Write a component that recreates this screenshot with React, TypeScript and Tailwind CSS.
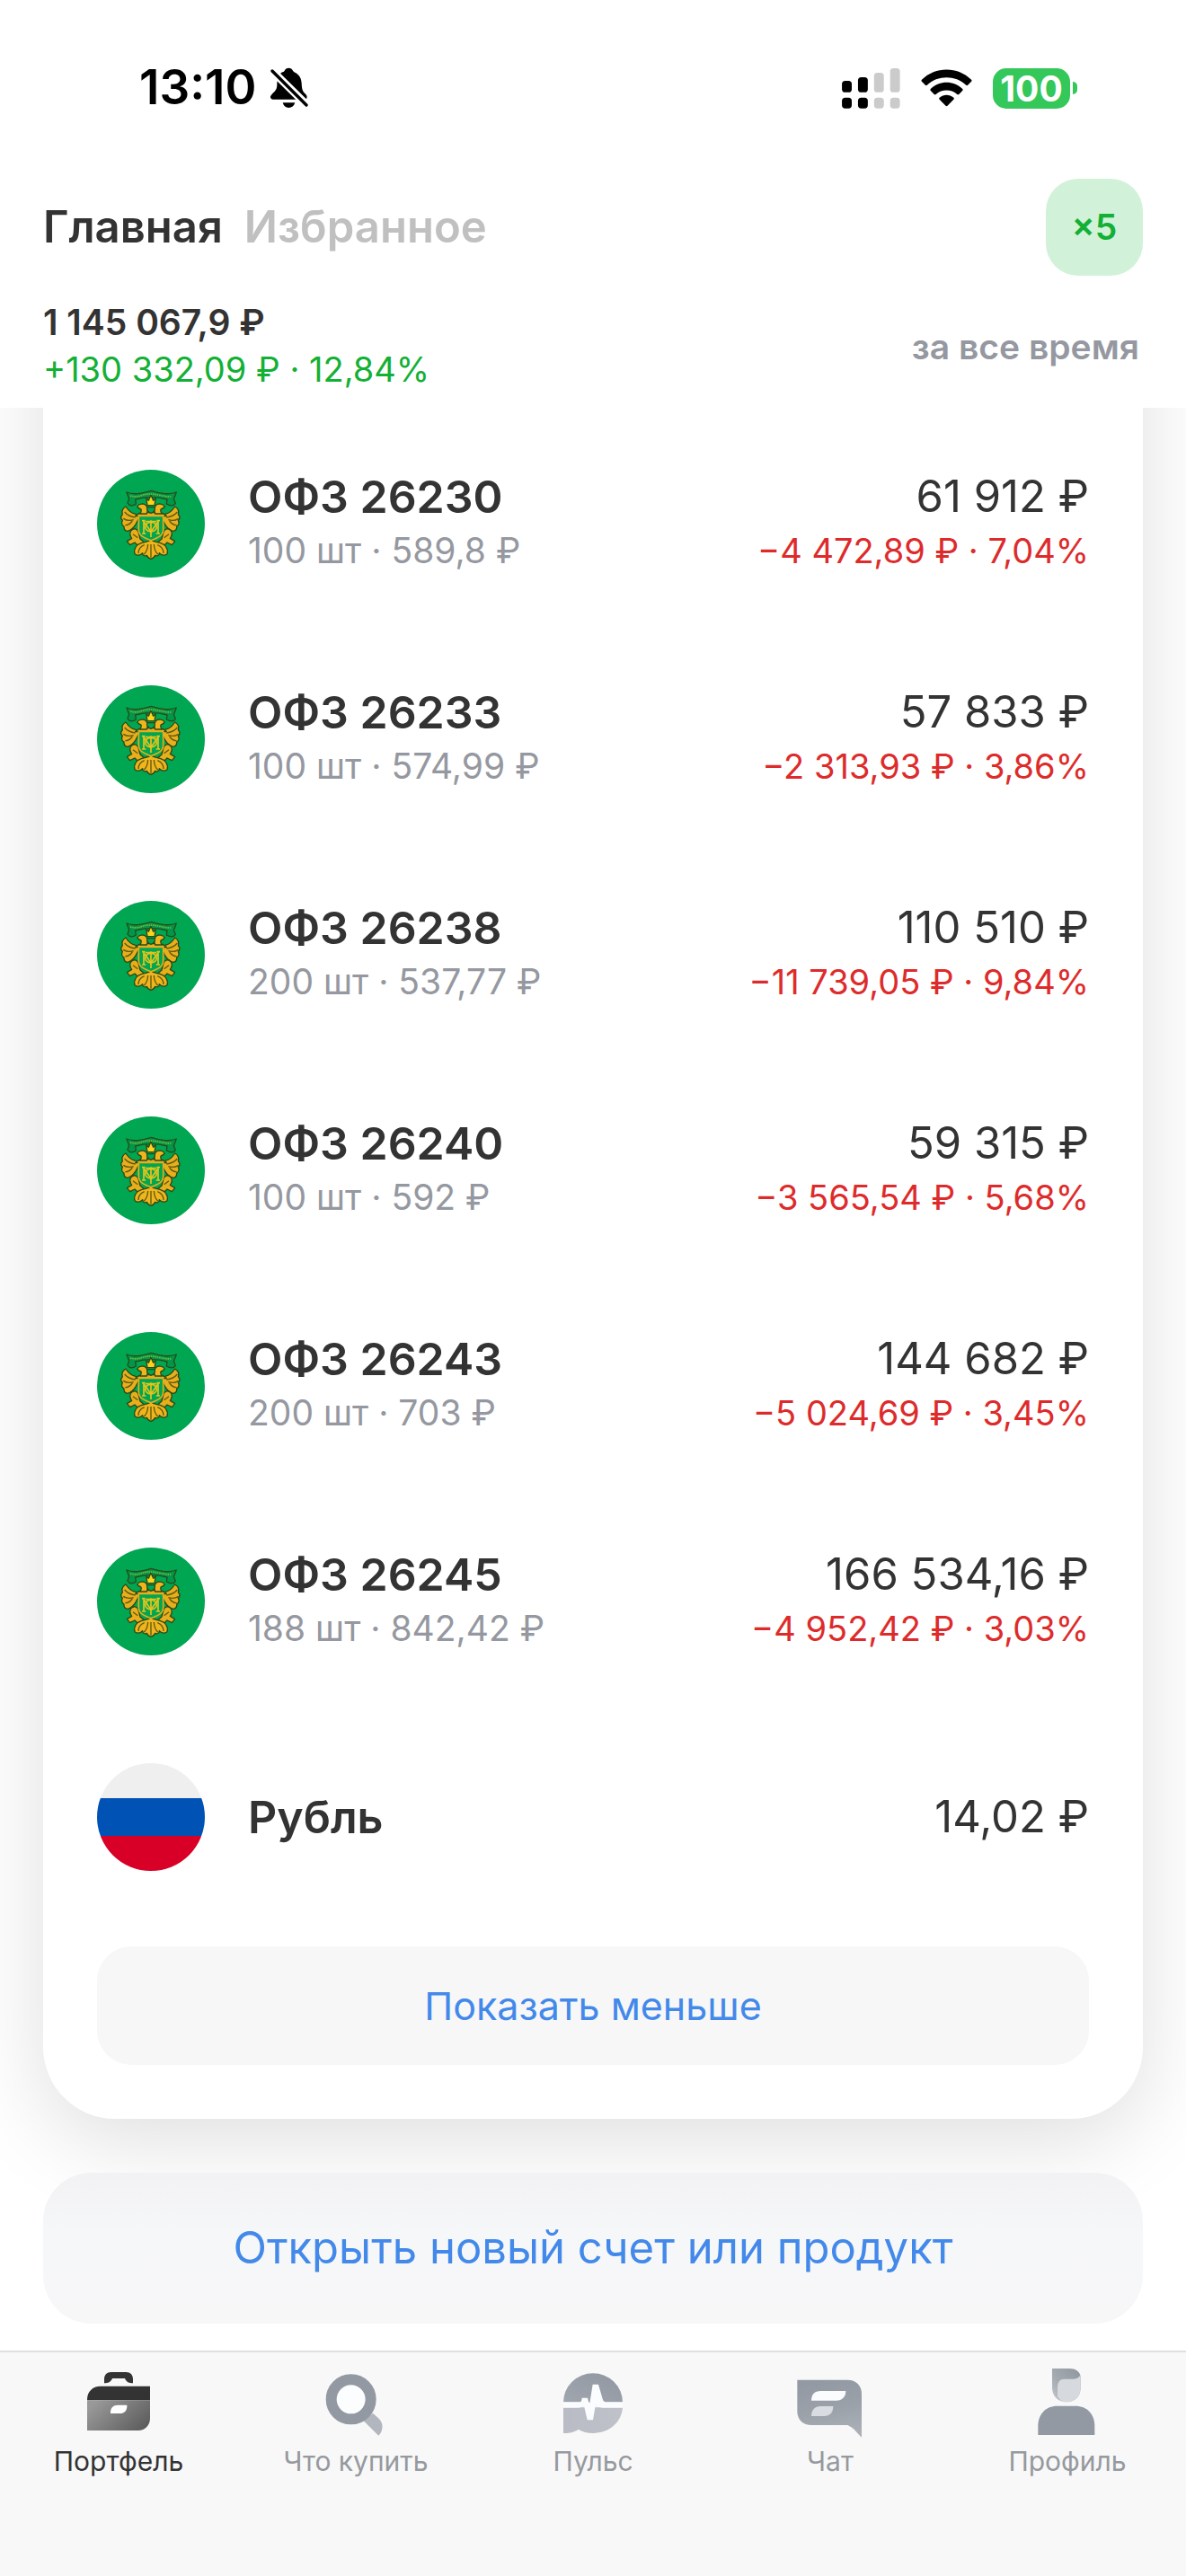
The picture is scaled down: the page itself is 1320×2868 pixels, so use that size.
import React from 'react';

interface Position {
  name: string;
  details?: string;
  amount: string;
  change?: string;
}

const positions: Position[] = [
  { name: 'ОФЗ 26230', details: '100 шт · 589,8 ₽', amount: '61 912 ₽', change: '−4 472,89 ₽ · 7,04%' },
  { name: 'ОФЗ 26233', details: '100 шт · 574,99 ₽', amount: '57 833 ₽', change: '−2 313,93 ₽ · 3,86%' },
  { name: 'ОФЗ 26238', details: '200 шт · 537,77 ₽', amount: '110 510 ₽', change: '−11 739,05 ₽ · 9,84%' },
  { name: 'ОФЗ 26240', details: '100 шт · 592 ₽', amount: '59 315 ₽', change: '−3 565,54 ₽ · 5,68%' },
  { name: 'ОФЗ 26243', details: '200 шт · 703 ₽', amount: '144 682 ₽', change: '−5 024,69 ₽ · 3,45%' },
  { name: 'ОФЗ 26245', details: '188 шт · 842,42 ₽', amount: '166 534,16 ₽', change: '−4 952,42 ₽ · 3,03%' },
  { name: 'Рубль', amount: '14,02 ₽' }
];

const BellOffIcon = () => (
  <svg viewBox="0 0 126 138" className="w-[42px] h-[46px]" aria-hidden="true">
    <path
      d="M37 17c5-2 8-3 10-6 3-6 7-9 14-9s11 3 14 9c2 4 6 5 10 8 12 8 18 18 19 34 1 20 3 27 14 37 6 6 5 17-3 17H9c-9 0-12-9-6-15 13-13 18-17 19-31 0-19 3-34 15-44z"
      fill="#000"
    />
    <path d="M41 118h41c-3 11-11 17-21 17s-17-6-20-17z" fill="#000" />
    <path d="M-4 2l128 126" stroke="#fff" strokeWidth="26" />
    <path d="M6 12l114 114" stroke="#000" strokeWidth="10" strokeLinecap="round" />
  </svg>
);

const SignalIcon = () => (
  <svg viewBox="0 0 196 136" className="w-[65px] h-[45px]" aria-hidden="true">
    <g fill="#000">
      <rect x="0" y="42" width="33" height="39" rx="11" />
      <rect x="54" y="30" width="33" height="51" rx="11" />
      <rect x="0" y="99" width="33" height="36" rx="11" />
      <rect x="54" y="99" width="33" height="36" rx="11" />
    </g>
    <g fill="#cbcbcb">
      <rect x="108" y="15" width="33" height="66" rx="11" />
      <rect x="162" y="0" width="33" height="81" rx="11" />
      <rect x="108" y="99" width="33" height="36" rx="11" />
      <rect x="162" y="99" width="33" height="36" rx="11" />
    </g>
  </svg>
);

const WifiIcon = () => (
  <svg viewBox="0 0 172 128" className="w-[57px] h-[42px]" aria-hidden="true">
    <path d="M2 36q-3 3 0 6l12 12q3 3 6 0C56 20 116 20 152 54q3 3 6 0l12-12q3-3 0-6C124-10 48-10 2 36z" />
    <path d="M32 67q-3 3 0 6l12 12q3 3 6 0c20-18 52-18 72 0q3 3 6 0l12-12q3-3 0-6c-31-29-77-29-108 0z" />
    <path d="M62 97q-3 3 0 6l21 21q3 3 6 0l21-21q3-3 0-6c-14-13-34-13-48 0z" />
  </svg>
);

const Emblem = () => (
  <svg viewBox="54 39 360 360" className="w-[120px] h-[120px] shrink-0" aria-hidden="true">
    <circle cx="234" cy="219" r="180" fill="#00a651" />
    <g stroke="#2a4a18" strokeWidth="4" strokeLinejoin="round">
      {/* ribbon */}
      <path
        d="M153 114c24 10 50 4 82-5 32 9 58 15 84 5l-9 23 6 14c-8 12-20 8-30 2l2-15c-32-9-72-9-106 0l2 15c-10 8-22 8-28-3l5-14z"
        fill="#00974b"
      />
      {/* wings */}
      <path
        d="M150 162c-10 6-15 14-11 26-6 6-6 14 0 20-4 8-2 16 5 20-1 9 4 15 12 16 14-3 22-14 28-24l14-26-18-8c-14-2-22-12-30-24z"
        fill="#e8ae1c"
      />
      <path
        d="M314 162c10 6 15 14 11 26 6 6 6 14 0 20 4 8 2 16-5 20 1 9-4 15-12 16-14-3-22-14-28-24l-14-26 18-8c14-2 22-12 30-24z"
        fill="#e8ae1c"
      />
      {/* shoulders and heads */}
      <path d="M182 194c8-12 26-14 52-12 26-2 44 0 52 12z" fill="#e8ae1c" />
      <path d="M188 162c6-10 22-12 30-4 6 10 6 18 2 28h-22c4-8 6-12 2-16-4 0-8-3-12-8z" fill="#f0b41c" />
      <path d="M280 162c-6-10-22-12-30-4-6 10-6 18-2 28h22c-4-8-6-12-2-16 4 0 8-3 12-8z" fill="#f0b41c" />
      <path d="M218 134l8 8 8-18 8 18 8-8-4 24h-24z" fill="#ffd21c" />
      <path d="M221 164h26c2 9-4 17-13 20-9-3-15-11-13-20z" fill="#00a651" />
      {/* legs */}
      <path d="M168 242c8-10 20-6 24 4l6 24 14 12-20 12-12-12-16 8-10-12 16-10c-6-8-8-18-2-26z" fill="#e8ae1c" />
      <path d="M300 242c-8-10-20-6-24 4l-6 24-14 12 20 12 12-12 16 8 10-12-16-10c6-8 8-18 2-26z" fill="#e8ae1c" />
      {/* tail */}
      <path
        d="M234 272c-8 8-20 8-32 12-16 5-26 18-22 36 8 6 18 5 26-3 0 8 6 12 14 8 2 6 8 10 14 12 6-2 12-6 14-12 8 4 14 0 14-8 8 8 18 9 26 3 4-18-6-31-22-36-12-4-24-4-32-12z"
        fill="#f0b41c"
      />
    </g>
    <path d="M165 126q20 6 40-2t58 0 40 3" fill="none" stroke="#8dbb35" strokeWidth="5" strokeDasharray="4 3" />
    <g fill="none" stroke="#5c5a14" strokeWidth="4">
      <path d="M146 180c10 12 20 16 36 18M142 202c12 8 22 8 34 4M148 224c10 0 18-6 24-14M322 180c-10 12-20 16-36 18M326 202c-12 8-22 8-34 4M320 224c-10 0-18-6-24-14" />
      <path d="M234 288v44M224 288c-1 14-4 26-14 34M244 288c1 14 4 26 14 34M212 290c-12 5-20 14-20 28M256 290c12 5 20 14 20 28" />
      <path d="M174 254l16 12M294 254l-16 12" />
    </g>
    <path
      d="M193 193h82v46c0 20-18 28-41 36-23-8-41-16-41-36z"
      fill="#00a651"
      stroke="#e8ae1c"
      strokeWidth="5"
    />
    {/* monogram on the shield */}
    <g fill="none" stroke="#e6c41c" strokeWidth="5">
      <path d="M210 210v40M258 210v40M210 212l24 34 24-34M204 252h13M251 252h13M204 209h11M253 209h11" />
      <path d="M234 208v56M216 212h36" />
      <ellipse cx="234" cy="230" rx="19" ry="16" />
    </g>
  </svg>
);

const RussiaFlag = () => (
  <svg viewBox="0 0 120 120" className="w-[120px] h-[120px] shrink-0" aria-hidden="true">
    <clipPath id="flag-circle">
      <circle cx="60" cy="60" r="60" />
    </clipPath>
    <g clipPath="url(#flag-circle)">
      <rect width="120" height="39" fill="#efefef" />
      <rect y="39" width="120" height="42" fill="#0052b4" />
      <rect y="81" width="120" height="39" fill="#d80027" />
    </g>
  </svg>
);

const PortfolioIcon = () => (
  <svg viewBox="276 105 240 240" className="w-20 h-20" aria-hidden="true">
    <defs>
      <linearGradient id="case" x1="0" y1="0.3" x2="1" y2="0.8">
        <stop offset="0" stopColor="#999" />
        <stop offset="1" stopColor="#5c5c5c" />
      </linearGradient>
    </defs>
    <path d="M348 160v-14c0-14 9-23 23-23h50c14 0 23 9 23 23v14c-13 0-22-4-27-16h-42c-5 12-14 16-27 16z" fill="#333" />
    <path d="M291 217v-2c0-27 18-45 45-45h165v47z" fill="#333" />
    <path d="M291 217h210v60c0 24-16 41-40 41H291z" fill="url(#case)" />
    <path d="M369 261v-4c0-15 9-24 24-24h31v3c0 16-9 25-24 25z" fill="#fff" />
  </svg>
);

const SearchIcon = () => (
  <svg viewBox="1068 105 240 240" className="w-20 h-20" aria-hidden="true">
    <path d="M1214 286l31-26 20 18c17 16 14 42-1 57z" fill="#b1b6bf" />
    <circle cx="1172" cy="214" r="66" fill="#fcfdfe" stroke="#9299a2" strokeWidth="36" />
  </svg>
);

const PulseIcon = () => (
  <svg viewBox="0 0 240 240" className="w-20 h-20" aria-hidden="true">
    <defs>
      <linearGradient id="pulse-top" x1="0" y1="1" x2="1" y2="0">
        <stop offset="0" stopColor="#a0a6ae" />
        <stop offset="1" stopColor="#9097a2" />
      </linearGradient>
      <linearGradient id="pulse-bottom" x1="0" y1="0" x2="1" y2="0">
        <stop offset="0" stopColor="#b9bbc5" />
        <stop offset="1" stopColor="#c0c2ca" />
      </linearGradient>
    </defs>
    <path d="M21 119a99 97 0 0 1 198 0z" fill="url(#pulse-top)" />
    <path d="M21 136h198c-3 50-45 86-99 86-19 0-36-5-49-13-13 10-30 13-50 13z" fill="url(#pulse-bottom)" />
    <path
      d="M21 118h54c6 0 7-4 8-14h19l6 24 11-69h19l14 48c2 8 6 11 14 11h53v19h-66c-14 0-19-6-23-17l-10 58h-19l-12-52c-5 8-10 11-19 11H21z"
      fill="#fbfcfe"
    />
  </svg>
);

const ChatIcon = () => (
  <svg viewBox="792 0 240 240" className="w-20 h-20" aria-hidden="true">
    <defs>
      <linearGradient id="chat" x1="0.4" y1="0" x2="0.6" y2="1">
        <stop offset="0" stopColor="#9299a3" />
        <stop offset="0.5" stopColor="#9aa1a9" />
        <stop offset="1" stopColor="#acb1b8" />
      </linearGradient>
    </defs>
    <path d="M802 44h168c28 0 47 18 47 46v146c-16-16-28-33-47-41H850c-28 0-48-18-48-46z" fill="url(#chat)" />
    <path d="M849 113c0-20 11-32 31-32h84c0 20-12 32-32 32z" fill="#fbfcfe" />
    <path d="M849 165c0-20 11-33 31-33h42c0 21-11 33-31 33z" fill="#d9dde1" />
  </svg>
);

const ProfileIcon = () => (
  <svg viewBox="0 0 240 240" className="w-20 h-20" aria-hidden="true">
    <defs>
      <linearGradient id="hair" x1="1" y1="0" x2="0" y2="1">
        <stop offset="0" stopColor="#8f969f" />
        <stop offset="0.6" stopColor="#a4abb1" />
        <stop offset="1" stopColor="#c5cace" />
      </linearGradient>
    </defs>
    <path d="M69 6h58c20 0 35 10 37 28v36c0 28-18 48-47 48S69 98 69 70z" fill="url(#hair)" />
    <path d="M87 98V68c0-17 8-27 24-27h29c13 0 21-6 24-16v45c0 28-18 48-47 48-14 0-24-9-30-20z" fill="#d6dadf" />
    <path d="M22 228v-30c0-40 26-67 64-67h61c38 0 64 27 64 67v30z" fill="#9299a3" />
  </svg>
);

const tabs = [
  { label: 'Портфель', icon: PortfolioIcon, active: true },
  { label: 'Что купить', icon: SearchIcon },
  { label: 'Пульс', icon: PulseIcon },
  { label: 'Чат', icon: ChatIcon },
  { label: 'Профиль', icon: ProfileIcon }
];

const StatusBar = () => (
  <div className="flex h-49 items-center justify-between pl-[155px] pr-[121px] text-black">
    <div className="flex items-center gap-4">
      <span className="text-[53px] font-semibold">13:10</span>
      <BellOffIcon />
    </div>
    <div className="flex items-center gap-[23px]">
      <SignalIcon />
      <WifiIcon />
      <div className="flex items-center gap-[3px]">
        <span className="flex h-[45px] w-[86px] items-center justify-center rounded-[15px] bg-[#34c759] text-[39px] leading-none font-bold text-white">
          100
        </span>
        <span className="h-[14px] w-[5px] rounded-r-full bg-[#34c759]" />
      </div>
    </div>
  </div>
);

const PositionRow: React.FC<{ position: Position }> = ({ position }) => (
  <li className="flex h-60 items-center gap-12">
    {position.details ? <Emblem /> : <RussiaFlag />}
    <div className="flex-1 leading-[60px]">
      <div className="text-[50px] font-semibold">{position.name}</div>
      {position.details && <div className="text-[39px] text-[#9598a0]">{position.details}</div>}
    </div>
    <div className="text-right leading-[60px]">
      <div className="text-[49px]">{position.amount}</div>
      {position.change && <div className="text-[38px] text-[#dd2b2b]">{position.change}</div>}
    </div>
  </li>
);

export default function App() {
  return (
    <div className="flex min-h-screen flex-col bg-white font-['Inter','Liberation_Sans',sans-serif] text-[#333]">
      <header className="sticky top-0 z-10 bg-white">
        <StatusBar />
        <div className="flex h-[114px] items-center justify-between px-12">
          <div className="flex gap-6 text-[49px] font-semibold">
            <button type="button">Главная</button>
            <button type="button" className="text-[#c0c0c0]">Избранное</button>
          </div>
          <button
            type="button"
            className="h-[108px] w-[108px] rounded-[36px] bg-[#d2f1d9] text-[39px] font-semibold text-[#12b035]"
          >
            ×5
          </button>
        </div>
        <div className="flex items-center justify-between px-12 pt-[22px] pb-4 text-[39px] leading-[53px]">
          <div>
            <div className="font-semibold">1 145 067,9 ₽</div>
            <div className="text-[38px] text-[#12b035]">+130 332,09 ₽ · 12,84%</div>
          </div>
          <div className="pr-1 font-semibold text-[#9598a1]">за все время</div>
        </div>
      </header>

      <main className="flex-1 px-12">
        {/* the card goes on under the sticky header */}
        <section className="-mt-60 rounded-[80px] bg-white px-15 pt-[249px] pb-15 shadow-[0_24px_96px_rgba(0,0,0,0.13)]">
          <ul>
            {positions.map((position) => (
              <PositionRow key={position.name} position={position} />
            ))}
          </ul>
          <button
            type="button"
            className="mt-6 h-33 w-full rounded-[38px] bg-[#f7f7f8] text-[43px] text-[#4389ea]"
          >
            Показать меньше
          </button>
        </section>
        <button
          type="button"
          className="relative mt-15 h-42 w-full rounded-[54px] bg-linear-to-b from-[#f2f2f4] via-[#f6f7f9] via-40% to-[#f7f7f8] text-[49px] text-[#4389ea]"
        >
          Открыть новый счет или продукт
        </button>
      </main>

      <nav className="relative mt-[30px] grid h-[251px] grid-cols-5 items-start border-t-2 border-[#dfe0e1] bg-[#f8f8f8] pt-4">
        {tabs.map(({ label, icon: Icon, active }) => (
          <a
            key={label}
            href="#"
            className={`flex flex-col items-center text-[30px] leading-[50px] ${active ? 'text-[#333]' : 'text-[#96999e]'}`}
          >
            <Icon />
            {label}
          </a>
        ))}
      </nav>
    </div>
  );
}
